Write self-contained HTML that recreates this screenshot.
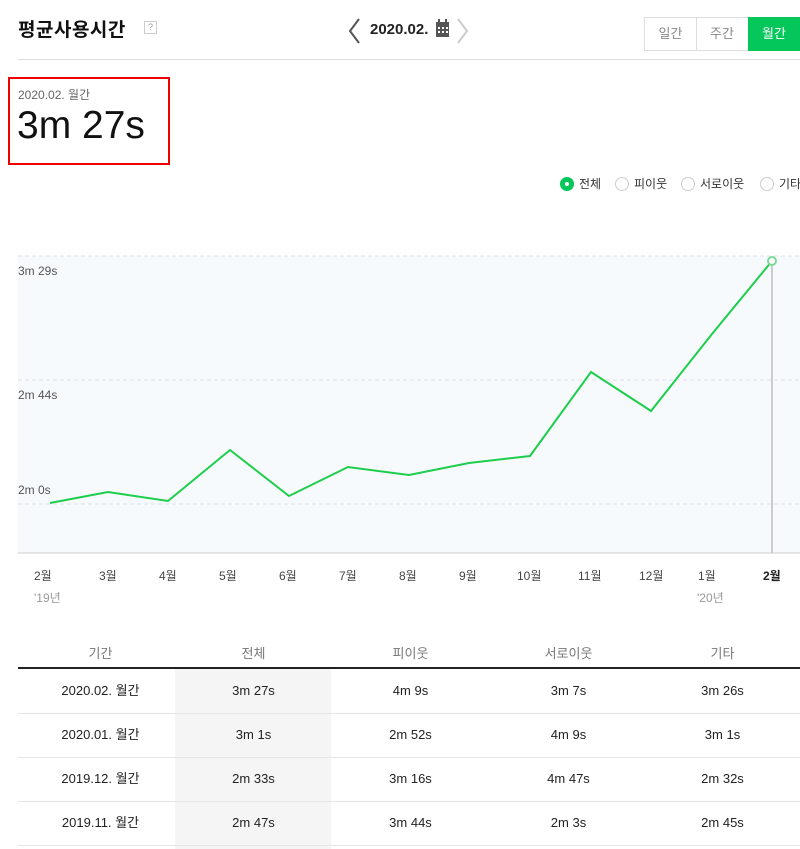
<!DOCTYPE html>
<html><head><meta charset="utf-8"><style>
*{margin:0;padding:0;box-sizing:border-box}
body{width:800px;height:849px;overflow:hidden;background:#fff;font-family:"Liberation Sans","Noto Sans CJK KR",sans-serif;position:relative;color:#222}
.a{position:absolute;white-space:nowrap}
.cell{position:absolute;width:157px;text-align:center;font-size:13px;line-height:16px;height:16px;color:#222}
.hd{color:#777}
.r{position:absolute;top:176px;font-size:12px;line-height:16px;color:#333;white-space:nowrap}
.rb{display:inline-block;width:14px;height:14px;border-radius:50%;border:1px solid #ccc;vertical-align:-3px;margin-right:5px;background:#fff}
</style></head><body>
<div class="a" style="left:18px;top:18px;font-size:19px;line-height:26px;font-weight:bold;color:#111;letter-spacing:0.5px">평균사용시간</div>
<div class="a" style="left:144px;top:21px;width:13px;height:13px;border:1px solid #ccc;font-size:9px;color:#999;text-align:center;line-height:11px">?</div>
<svg class="a" style="left:346px;top:17px" width="16" height="28"><path d="M13 2 L4 14 L13 26" stroke="#555" stroke-width="2" fill="none"/></svg>
<div class="a" style="left:370px;top:21px;font-size:15px;font-weight:bold;color:#222">2020.02.</div>
<svg class="a" style="left:435px;top:19px" width="16" height="19"><rect x="1" y="3" width="13" height="15" fill="#555"/><rect x="3" y="0" width="2" height="4" fill="#555"/><rect x="10" y="0" width="2" height="4" fill="#555"/><g fill="#fff"><rect x="3" y="8" width="2" height="2"/><rect x="7" y="8" width="2" height="2"/><rect x="11" y="8" width="2" height="2"/><rect x="3" y="12" width="2" height="2"/><rect x="7" y="12" width="2" height="2"/><rect x="11" y="12" width="2" height="2"/></g></svg>
<svg class="a" style="left:455px;top:17px" width="16" height="28"><path d="M3 2 L12 14 L3 26" stroke="#ccc" stroke-width="2" fill="none"/></svg>
<div class="a" style="left:644px;top:17px;width:53px;height:34px;border:1px solid #ddd;font-size:13px;color:#888;text-align:center;line-height:32px">일간</div>
<div class="a" style="left:696px;top:17px;width:53px;height:34px;border:1px solid #ddd;border-left:none;font-size:13px;color:#888;text-align:center;line-height:32px">주간</div>
<div class="a" style="left:748px;top:17px;width:52px;height:34px;background:#03c75a;font-size:13px;color:#fff;text-align:center;line-height:34px">월간</div>
<div class="a" style="left:18px;top:59px;width:782px;height:1px;background:#ddd"></div>
<div class="a" style="left:8px;top:77px;width:162px;height:88px;border:2px solid #e00"></div>
<div class="a" style="left:18px;top:86px;font-size:12px;color:#666">2020.02. 월간</div>
<div class="a" style="left:17px;top:102px;font-size:39px;line-height:48px;color:#111">3m 27s</div>
<div class="r" style="left:560px"><span class="rb" style="background:#03c75a;border-color:#03c75a;position:relative"><span style="position:absolute;left:4px;top:4px;width:4px;height:4px;background:#fff;border-radius:50%"></span></span>전체</div>
<div class="r" style="left:615px"><span class="rb"></span>피이웃</div>
<div class="r" style="left:681px"><span class="rb"></span>서로이웃</div>
<div class="r" style="left:760px"><span class="rb"></span>기타</div>
<svg class="a" style="left:0;top:250px" width="800" height="310">
<rect x="18" y="6" width="782" height="297" fill="#f6fafd"/>
<g stroke="#dde3ea" stroke-dasharray="4 3"><line x1="18" y1="6" x2="800" y2="6"/><line x1="18" y1="130" x2="800" y2="130"/><line x1="18" y1="254" x2="800" y2="254"/></g>
<line x1="18" y1="303" x2="800" y2="303" stroke="#ccc"/>
<line x1="772" y1="11" x2="772" y2="303" stroke="#ccc" stroke-width="2"/>
<g font-size="12" fill="#555" font-family="Liberation Sans"><text x="18" y="25">3m 29s</text><text x="18" y="149">2m 44s</text><text x="18" y="244">2m 0s</text></g>
<polyline fill="none" stroke="#1dcd4c" stroke-width="2" points="50,253 108,242 168,251 230,200 289,246 348,217 409,225 469,213 530,206 591,122 651,161 712,84 772,11"/>
<circle cx="772" cy="11" r="4" fill="#fff" stroke="#7ed99a" stroke-width="2"/>
</svg>
<div class="a" style="top:567px;left:0;width:800px;font-size:12px;color:#444">
<span class="a" style="left:34px">2월</span><span class="a" style="left:99px">3월</span><span class="a" style="left:159px">4월</span><span class="a" style="left:219px">5월</span><span class="a" style="left:279px">6월</span><span class="a" style="left:339px">7월</span><span class="a" style="left:399px">8월</span><span class="a" style="left:459px">9월</span><span class="a" style="left:517px">10월</span><span class="a" style="left:578px">11월</span><span class="a" style="left:639px">12월</span><span class="a" style="left:698px">1월</span><span class="a" style="left:763px;font-weight:bold;color:#222">2월</span>
<span class="a" style="left:34px;top:22px;color:#999">'19년</span><span class="a" style="left:697px;top:22px;color:#999">'20년</span></div>
<div class="a" style="left:175px;top:669px;width:156px;height:180px;background:#f5f5f5"></div>
<div class="a" style="left:18px;top:667px;width:782px;height:2px;background:#222"></div>
<div class="a" style="left:18px;top:713px;width:782px;height:1px;background:#e5e5e5"></div>
<div class="a" style="left:18px;top:757px;width:782px;height:1px;background:#e5e5e5"></div>
<div class="a" style="left:18px;top:801px;width:782px;height:1px;background:#e5e5e5"></div>
<div class="a" style="left:18px;top:845px;width:782px;height:1px;background:#e5e5e5"></div>
<div style="position:absolute;left:22px;top:646px">
<div class="cell hd" style="left:0">기간</div><div class="cell hd" style="left:153px">전체</div><div class="cell hd" style="left:310px">피이웃</div><div class="cell hd" style="left:468px">서로이웃</div><div class="cell hd" style="left:622px">기타</div>
<div class="cell" style="left:0;top:37px">2020.02. 월간</div><div class="cell" style="left:153px;top:37px">3m 27s</div><div class="cell" style="left:310px;top:37px">4m 9s</div><div class="cell" style="left:468px;top:37px">3m 7s</div><div class="cell" style="left:622px;top:37px">3m 26s</div>
<div class="cell" style="left:0;top:81px">2020.01. 월간</div><div class="cell" style="left:153px;top:81px">3m 1s</div><div class="cell" style="left:310px;top:81px">2m 52s</div><div class="cell" style="left:468px;top:81px">4m 9s</div><div class="cell" style="left:622px;top:81px">3m 1s</div>
<div class="cell" style="left:0;top:125px">2019.12. 월간</div><div class="cell" style="left:153px;top:125px">2m 33s</div><div class="cell" style="left:310px;top:125px">3m 16s</div><div class="cell" style="left:468px;top:125px">4m 47s</div><div class="cell" style="left:622px;top:125px">2m 32s</div>
<div class="cell" style="left:0;top:169px">2019.11. 월간</div><div class="cell" style="left:153px;top:169px">2m 47s</div><div class="cell" style="left:310px;top:169px">3m 44s</div><div class="cell" style="left:468px;top:169px">2m 3s</div><div class="cell" style="left:622px;top:169px">2m 45s</div>
</div>
</body></html>
